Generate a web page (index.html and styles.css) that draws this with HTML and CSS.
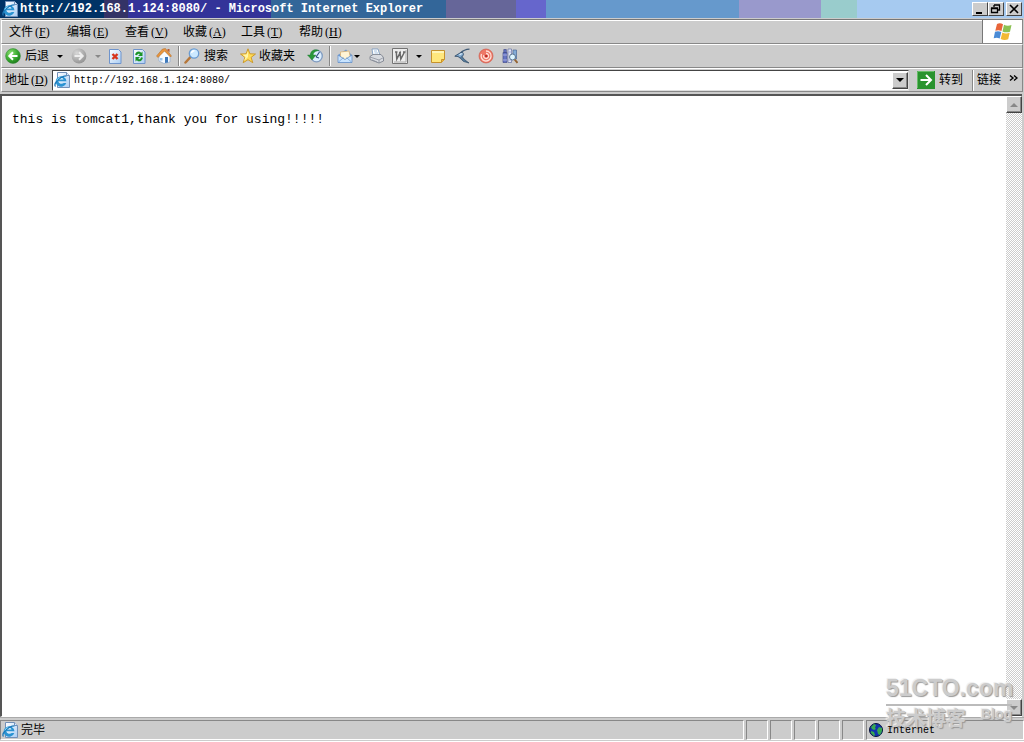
FILE: index.html
```html
<!DOCTYPE html>
<html lang="zh-CN">
<head>
<meta charset="utf-8">
<title>http://192.168.1.124:8080/ - Microsoft Internet Explorer</title>
<link rel="stylesheet" href="styles.css">
</head>
<body>
<svg class="defs" aria-hidden="true">
  <defs>
    <linearGradient id="paper" x1="0" y1="0" x2="1" y2="1"><stop offset="0" stop-color="#fff"/><stop offset="1" stop-color="#a9cdf4"/></linearGradient>
    <radialGradient id="green" cx=".35" cy=".3" r=".8"><stop offset="0" stop-color="#8be070"/><stop offset=".6" stop-color="#35a52c"/><stop offset="1" stop-color="#187018"/></radialGradient>
    <radialGradient id="grey" cx=".35" cy=".3" r=".8"><stop offset="0" stop-color="#d8d8d8"/><stop offset="1" stop-color="#8e8e8e"/></radialGradient>
    <symbol id="ie" viewBox="0 0 16 16">
      <path d="M3.500.5h9l3 3v12h-12z" fill="url(#paper)" stroke="#7290b8"/><path d="M12.500.5v3h3" fill="#dcecff" stroke="#7290b8"/>
      <path d="M12.500 9.300H4.300a3.300 3 0 0 0 5.500 1.700H12.300A5.400 5.200 0 1 1 12.500 9.300z" fill="#2a93d2"/><path d="M4.400 7.400h5.200a2.700 2.200 0 0 0-5.200 0" fill="#e6f7ff"/>
      <path d="M1.500 14.500C-1 12 6 4 12.500 3.800" fill="none" stroke="#1c78b8" stroke-width="1.200"/><path d="M2.800 8.500a4.500 4.500 0 0 1 3-3" fill="none" stroke="#8bdcfa"/>
    </symbol>
  </defs>
</svg>
<div class="window">
  <header class="title-bar">
    <svg class="icon"><use href="#ie"/></svg>
    <h1 class="title">http://192.168.1.124:8080/ - Microsoft Internet Explorer</h1>
    <div class="window-buttons">
      <button class="win-btn" aria-label="最小化"><svg viewBox="0 0 12 10"><path d="M2 8h6v2H2z"/></svg></button>
      <button class="win-btn" aria-label="还原"><svg viewBox="0 0 12 10"><path d="M4 1h6M4 1v2M9.500 1v5H8M1.500 4.500h6v4h-6zM1 4h7" fill="none" stroke="#000" stroke-width="1.300"/></svg></button>
      <button class="win-btn close" aria-label="关闭"><svg viewBox="0 0 12 10"><path d="M2 1l8 8M10 1L2 9" fill="none" stroke="#000" stroke-width="1.600"/></svg></button>
    </div>
  </header>

  <nav class="menu-bar">
    <div class="menus">
      <button class="menu">文件<span class="key">(<u>F</u>)</span></button>
      <button class="menu">编辑<span class="key">(<u>E</u>)</span></button>
      <button class="menu">查看<span class="key">(<u>V</u>)</span></button>
      <button class="menu">收藏<span class="key">(<u>A</u>)</span></button>
      <button class="menu">工具<span class="key">(<u>T</u>)</span></button>
      <button class="menu">帮助<span class="key">(<u>H</u>)</span></button>
    </div>
    <div class="flag">
      <svg viewBox="0 0 20 18"><path d="M4 1q3-1.500 6 .3L8.500 8Q5.500 6.500 2.300 7.800z" fill="#e8653a"/><path d="M11 1.800q3.500 1.700 7.500.2L17 8.700q-4 1.300-7.500-.3z" fill="#8cc152"/><path d="M2 8.800q3-1.300 6.300.2L6.700 15.500q-3-1.600-6-.2z" fill="#4a8bd6"/><path d="M9.300 9.500q3.500 1.600 7.400.3L15.200 16.300q-4 1.500-7.500-.3z" fill="#f3b932"/></svg>
    </div>
  </nav>

  <div class="tool-bar">
    <button class="tool back"><svg class="icon" viewBox="0 0 16 16"><circle cx="8" cy="8" r="7.400" fill="url(#green)" stroke="#39903a" stroke-width=".6"/><path d="M12.500 8H4.500M8 4.300L4.300 8 8 11.700" fill="none" stroke="#fff" stroke-width="2"/></svg>后退</button>
    <button class="drop" aria-label="后退列表"></button>
    <button class="tool forward" aria-label="前进"><svg class="icon" viewBox="0 0 16 16"><circle cx="8" cy="8" r="7.400" fill="url(#grey)"/><path d="M3.500 8h8M8 4.300L11.700 8 8 11.700" fill="none" stroke="#eee" stroke-width="2"/></svg></button>
    <button class="drop off" aria-label="前进列表"></button>
    <button class="tool stop" aria-label="停止"><svg class="icon" viewBox="0 0 16 16"><path d="M2.500 1.500h9l2.500 2.500v11.500H2.500z" fill="url(#paper)" stroke="#6f94cc"/><path d="M5.500 6l5 5M10.500 6l-5 5" stroke="#d8341c" stroke-width="2.400"/></svg></button>
    <button class="tool refresh" aria-label="刷新"><svg class="icon" viewBox="0 0 16 16"><path d="M2.500 1.500h9l2.500 2.500v11.500H2.500z" fill="url(#paper)" stroke="#6f94cc"/><path d="M5 7Q6 4 8.700 4.800L10 6M11 9.500Q10 13 7.300 12.200L6 11" fill="none" stroke="#1b9427" stroke-width="2"/><path d="M11.500 3.500v4.500H7zM4.500 13.500V9H9z" fill="#1b9427"/></svg></button>
    <button class="tool home" aria-label="主页"><svg class="icon" viewBox="0 0 16 16"><path d="M3 8l5-6 6 6.500V14l-6 1.500L3 13z" fill="#f8fbff" stroke="#8daad0" stroke-width=".7"/><path d="M.5 8L6.500 1l3-.5L15.500 8l-1 1L8.500 3 2 9.500z" fill="#e9953d" stroke="#ab6828" stroke-width=".5"/><path d="M11.500 1h2v3.500l-2-2z" fill="#b95d35"/><path d="M9 9h3v5.500L9 15z" fill="#3e79bb"/><path d="M4 10h2.500v2.500H4z" fill="#95c2ed"/></svg></button>
    <span class="divider"></span>
    <button class="tool search"><svg class="icon" viewBox="0 0 16 16"><path d="M6.500 9L1.500 14.500" stroke="#b6773a" stroke-width="2.500" stroke-linecap="round"/><circle cx="10" cy="5.500" r="4.700" fill="#cce9ff" stroke="#6a9bd1" stroke-width="1.300"/><path d="M7.500 5Q8 2.700 10.500 2.800" fill="none" stroke="#fff" stroke-width="1.400"/></svg>搜索</button>
    <button class="tool favorites"><svg class="icon" viewBox="0 0 16 16"><path d="M8 .8l1.900 5 5.600.2-4.400 3.400 1.700 5.300L8 11.700l-4.800 3 1.700-5.300L.5 6l5.600-.2z" fill="#ffdc58" stroke="#c99422" stroke-width=".9"/><path d="M8 3v6L4 13l1.500-4L2.500 6.800l4-.3z" fill="#fff5a9"/></svg>收藏夹</button>
    <button class="tool history" aria-label="历史"><svg class="icon" viewBox="0 0 16 16"><circle cx="9.500" cy="8" r="5.800" fill="#dcefff" stroke="#7f9bc0" stroke-width="1.300"/><path d="M9 9l3.500-5M9 9l3 1" stroke="#314f80" stroke-width="1.200"/><path d="M12 2.500C7 0 3 3.500 3.500 7H.5L5 12l4-5H6.300C6 5 8 3 12 2.500z" fill="#29983a" stroke="#187429" stroke-width=".4"/></svg></button>
    <span class="divider"></span>
    <button class="tool mail" aria-label="邮件"><svg class="icon" viewBox="0 0 16 16"><path d="M1 7L9 1.500 15 7v7.500H1z" fill="#6e9bd1"/><path d="M3.500 4l8.500-1 1.500 7-5 2-5-3z" fill="#fff4d5" stroke="#dcad65" stroke-width=".7"/><path d="M1 7l7 4.500L15 7v7.500H1z" fill="#c8e4ff" stroke="#5b88c4" stroke-width=".7"/><path d="M1.500 14l5-4.500M14.500 14l-5-4.500" stroke="#6998cd" stroke-width=".7"/></svg><i class="arrow"></i></button>
    <button class="tool print" aria-label="打印"><svg class="icon" viewBox="0 0 16 16"><path d="M4 1h6l2 6.500H5z" fill="#fff" stroke="#7395bc" stroke-width=".8"/><path d="M6 3h3M6.500 5h3.500" stroke="#8cb0d7" stroke-width=".8"/><path d="M2 8.500L5 6.500h8l2.500 3v3.500L11 15 2 11.500z" fill="#d8dbe0" stroke="#747a86" stroke-width=".8"/><path d="M2 9l9 3 4.500-2.500M11 12v3M4 12l5 2" fill="none" stroke="#8b919c" stroke-width=".8"/></svg></button>
    <button class="tool word" aria-label="编辑"><svg class="icon" viewBox="0 0 16 16"><path d="M.5.500h15v15H.500z" fill="#ededed" stroke="#747474"/><path d="M2 14h12V2" fill="none" stroke="#aaa"/><path d="M3 4h2.500M4.300 4l.5 7L8 5l.8 6L12.500 4M7 4.500h2M11 4h2.500" fill="none" stroke="#696969" stroke-width="1.500"/></svg></button>
    <button class="drop" aria-label="编辑列表"></button>
    <button class="tool note" aria-label="讨论"><svg class="icon" viewBox="0 0 16 16"><path d="M1.500 2.500h13v9l-3 3h-10z" fill="#ffe77d" stroke="#c6922d"/><path d="M2 4h12" stroke="#fff5b8" stroke-width="2"/><path d="M11.500 14.500v-3h3" fill="#efb742" stroke="#c6922d"/></svg></button>
    <button class="tool bird" aria-label="迅雷"><svg class="icon" viewBox="0 0 16 16"><path d="M15.500 1.200Q10 1.500 6.500 5" fill="none" stroke="#3f5a76" stroke-width="1.200"/><path d="M.8 8.200L4.500 5.800Q7 3.800 9 4.800q1.500 2-1.500 4.500Q5.500 10.500 4 8.500z" fill="#7ea6cb" stroke="#27435e" stroke-width=".8"/><path d="M5.500 9.500L9.500 13.500 15 15 10.500 11.500 8 8.500" fill="#547899" stroke="#27435e" stroke-width=".6"/><path d="M5.500 7q1.500-1.500 3-1.200" fill="none" stroke="#dff2ff" stroke-width="1.200"/></svg></button>
    <button class="tool target" aria-label="快车"><svg class="icon" viewBox="0 0 16 16"><circle cx="8" cy="8" r="7" fill="#ee7867" stroke="#cb4d3d" stroke-width=".6"/><path d="M8 3a5 5 0 1 1-4.500 3M8 5.500a2.500 2.500 0 1 1-2.300 1.700" fill="none" stroke="#ffe1d9" stroke-width="1.300"/><circle cx="8.300" cy="8" r="1.300" fill="#bb2922"/></svg></button>
    <button class="tool research" aria-label="信息检索"><svg class="icon" viewBox="0 0 16 16"><path d="M1 4.500h4v10H1zM1.800 1.500h2.500v3H1.800z" fill="#6675c4" stroke="#454f8c" stroke-width=".7"/><path d="M6 1h3.500v13.500H6z" fill="#e4e6f2" stroke="#6670a5" stroke-width=".7"/><path d="M1 7h4M6 4h3.500M1 12h4M6 12h3.500" stroke="#a8aee0"/><path d="M11 2h3.500v9H11z" fill="#83acd7" stroke="#4b6795" stroke-width=".7"/><circle cx="10.500" cy="9" r="3" fill="#dcf5ff" stroke="#597390"/><path d="M12.700 11.500l2.800 3.500" stroke="#946332" stroke-width="2"/></svg></button>
  </div>

  <form class="address-bar">
    <label class="address-label" for="address">地址<span class="key">(<u>D</u>)</span></label>
    <div class="address-box">
      <svg class="icon"><use href="#ie"/></svg>
      <input class="address" id="address" type="text" value="http://192.168.1.124:8080/">
      <button class="bevel combo" type="button" aria-label="地址列表"><i class="arrow"></i></button>
    </div>
    <button class="go" type="button"><svg viewBox="0 0 18 18"><path d="M0 0h18v18H0z" fill="#29932e"/><path d="M.5 17V.5H17" fill="none" stroke="#67bd68"/><path d="M3.500 9h10M9 4l5 5-5 5" fill="none" stroke="#fff" stroke-width="2"/></svg>转到</button>
    <button class="links" type="button">链接<svg viewBox="0 0 9 7"><path d="M1 .5l3 2.500-3 2.500M5 .5L8 3 5 5.500" fill="none" stroke="#000" stroke-width="1.400"/></svg></button>
  </form>

  <div class="view">
    <main class="page">this is tomcat1,thank you for using!!!!!</main>
    <div class="scrollbar">
      <button class="bevel scroll" aria-label="向上滚动"><i class="arrow up"></i></button>
      <button class="bevel scroll" aria-label="向下滚动"><i class="arrow dim"></i></button>
    </div>
  </div>

  <footer class="status-bar">
    <div class="cell message"><svg class="icon"><use href="#ie"/></svg>完毕</div>
    <div class="cell"></div><div class="cell"></div><div class="cell"></div><div class="cell"></div><div class="cell"></div>
    <div class="cell zone"><svg class="icon globe" viewBox="0 0 14 14"><circle cx="7" cy="7" r="6.500" fill="#1233ae" stroke="#061238"/><path d="M2 4l3-3 2 1-1 3 1 1-2 1-2-1zM8 7l2-3 3 1v3l-2 4-2-1zM2 8l3 1 1 3-1 1-3-3z" fill="#36a951"/></svg><span class="zone-name">Internet</span></div>
  </footer>

  <div class="watermark">
    <div class="mark-name">51CTO.com</div>
    <div class="mark-sub"><span>技术博客</span><span class="mark-blog">Blog</span></div>
  </div>
</div>
</body>
</html>
```
FILE: styles.css
```css
* { box-sizing: border-box; }

body {
  margin: 0;
  background: #ccc;
  color: #000;
  font: 12px/16px "Liberation Sans", "Noto Sans CJK SC", sans-serif;
}

button {
  margin: 0;
  padding: 0;
  border: 0;
  background: none;
  color: inherit;
  font: inherit;
}

svg { display: block; flex: none; }
.defs { position: absolute; width: 0; height: 0; }
.icon { width: 16px; height: 16px; }
.key { margin-left: 2px; font: 12px/16px "Liberation Serif", serif; }

.window {
  position: relative;
  display: flex;
  flex-direction: column;
  height: 100vh;
  overflow: hidden;
  background: #ccc;
}

.title-bar {
  display: flex;
  align-items: center;
  height: 18px;
  padding: 0 2px;
  background: linear-gradient(90deg, #036 104px, #336 104px 128px, #339 128px 271px, #369 271px 446px, #669 446px 516px, #66c 516px 546px, #69c 546px 739px, #99c 739px 821px, #9cc 821px 857px, #a6caf0 857px);
}
.title {
  flex: 1;
  margin: 0 0 0 2px;
  color: #fff;
  font: bold 12px/18px "Liberation Mono", monospace;
  white-space: nowrap;
}
.window-buttons { display: flex; }
.win-btn {
  display: flex;
  align-items: center;
  justify-content: center;
  width: 16px;
  height: 14px;
  background: #ccc;
  border: 1px solid;
  border-color: #fff #444 #444 #fff;
}
.win-btn svg { width: 12px; height: 10px; }
.close { margin-left: 2px; }

.menu-bar, .tool-bar, .address-bar {
  display: flex;
  margin: 0 1px;
  border: 1px solid;
  border-color: #fff #888 #888 #fff;
}
.menu-bar { height: 25px; margin-top: 1px; border-top-color: #777; box-shadow: inset 0 1px #fff; }
.menus { display: flex; flex: 1; gap: 16px; padding-left: 7px; }
.menu { display: flex; align-items: center; width: 42px; white-space: nowrap; }
.flag {
  display: flex;
  align-items: center;
  justify-content: center;
  width: 40px;
  background: #fff;
  border-left: 1px solid #777;
}
.flag svg { width: 20px; height: 18px; }

.tool-bar { align-items: center; height: 24px; padding-left: 3px; }
.tool { display: flex; align-items: center; gap: 4px; white-space: nowrap; }
.arrow {
  width: 0;
  height: 0;
  border: 3px solid transparent;
  border-top-color: #000;
  border-bottom: 0;
}
.drop::before {
  content: "";
  display: block;
  border: 3px solid transparent;
  border-top-color: #000;
  border-bottom: 0;
}
.drop { margin: 0 8px; }
.drop.off { margin-right: 6px; }
.drop.off::before { border-top-color: #888; }
.refresh, .home { margin-left: 8px; }
.home { margin-left: 9px; }
.divider { width: 2px; height: 20px; margin: 0 4px 0 6px; border-left: 1px solid #888; border-right: 1px solid #fff; }
.favorites { margin-left: 12px; gap: 3px; }
.history { margin-left: 12px; }
.mail { gap: 1px; margin-left: 2px; }
.print { margin-left: 8px; }
.word { margin-left: 8px; }
.bird, .target, .research { margin-left: 8px; }

.address-bar { align-items: center; height: 24px; }
.address-label { display: flex; align-items: center; width: 50px; padding-left: 3px; white-space: nowrap; }
.address-box {
  display: flex;
  align-items: center;
  flex: 1;
  height: 21px;
  padding-left: 1px;
  background: #fff;
  border: 1px solid;
  border-color: #444 #ddd #ddd #444;
}
.address {
  flex: 1;
  min-width: 0;
  padding: 2px 0 0 4px;
  border: 0;
  outline: 0;
  background: none;
  color: #000;
  font: 10px/16px "Liberation Mono", monospace;
}
.bevel {
  display: flex;
  align-items: center;
  justify-content: center;
  width: 16px;
  height: 17px;
  background: #ccc;
  border: 1px solid;
  border-color: #fff #444 #444 #fff;
  box-shadow: inset -1px -1px #888;
}
.combo .arrow { border-width: 4px; border-bottom: 0; }
.go { display: flex; align-items: center; gap: 4px; margin: 0 9px 0 8px; }
.go svg { width: 18px; height: 18px; }
.links {
  display: flex;
  align-items: center;
  gap: 8px;
  height: 21px;
  padding: 0 4px;
  border-left: 1px solid #888;
  box-shadow: inset 1px 0 #fff;
  white-space: nowrap;
}
.links svg { width: 9px; height: 7px; margin-bottom: 4px; }

.view {
  display: flex;
  flex: 1;
  min-height: 0;
  margin: 2px 2px 0 0;
  background: #fff;
  border: solid;
  border-width: 2px 0 1px 2px;
  border-color: #555 #ddd #fff #555;
}
.page { flex: 1; padding: 16px 10px; font: 13px/16px "Liberation Mono", monospace; }
.scrollbar {
  display: flex;
  flex-direction: column;
  justify-content: space-between;
  width: 16px;
  background: repeating-conic-gradient(#ccc 0 25%, #fff 0 50%) 0 0 / 2px 2px;
}
.up { border: 4px solid transparent; border-top: 0; border-bottom-color: #888; }
.dim { border-width: 4px; border-bottom: 0; border-top-color: #888; }

.status-bar {
  display: grid;
  grid-template-columns: 1fr repeat(5, 22px) 158px;
  gap: 2px;
  height: 25px;
  padding: 2px 0 3px;
  border-top: 1px solid #aaa;
  border-bottom: 1px solid #fff;
}
.cell {
  display: flex;
  align-items: center;
  border: 1px solid;
  border-color: #888 #fff #fff #888;
}
.message { gap: 3px; padding-left: 1px; }
.zone { gap: 4px; padding-left: 2px; }
.globe { width: 14px; height: 14px; }
.zone-name { z-index: 2; padding-top: 2px; font: 10px/16px "Liberation Mono", monospace; }

.watermark {
  position: absolute;
  right: 12px;
  bottom: 10px;
  z-index: 1;
  width: 126px;
  color: #ccc;
  text-shadow: 1px 1px 1px #999, -1px -1px 1px #eee;
  font-weight: bold;
  pointer-events: none;
}
.mark-name {
  border-bottom: 2px solid #bbb;
  font: bold 23px/32px "Liberation Sans Narrow", "Liberation Sans", sans-serif;
  white-space: nowrap;
}
.mark-sub { display: flex; justify-content: space-between; font-size: 20px; line-height: 26px; white-space: nowrap; }
.mark-blog { font-size: 14px; line-height: 16px; }
```
